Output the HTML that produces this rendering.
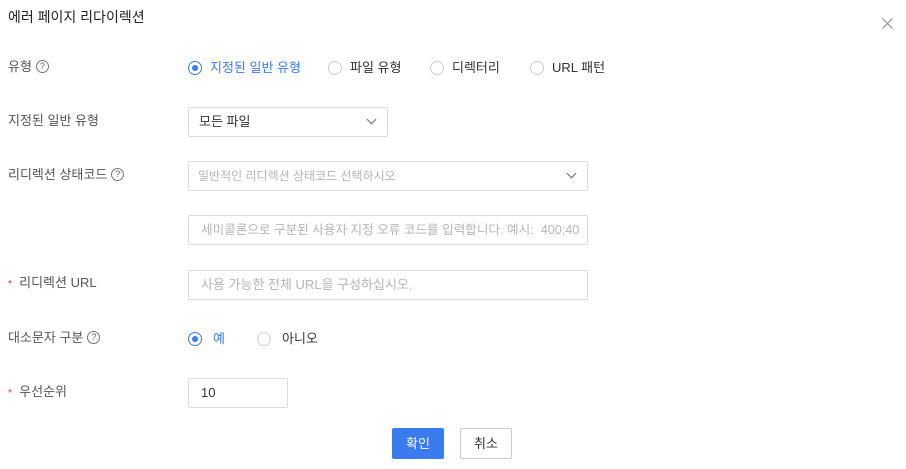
<!DOCTYPE html>
<html><head><meta charset="utf-8"><style>
*{margin:0;padding:0;box-sizing:border-box}
body{width:906px;height:469px;background:#fff;position:relative;overflow:hidden;font-family:"Liberation Sans","Noto Sans CJK KR",sans-serif;font-size:13px;color:#333}
.a{position:absolute;white-space:nowrap;line-height:16px}
.lbl{color:#555}
.box{position:absolute;border:1px solid #dcdcdc;border-radius:2px;background:#fff;overflow:hidden;white-space:nowrap}
.ph{color:#b5b5b5}
.q{display:inline-block;width:13px;height:13px;border:1px solid #777;border-radius:50%;font-size:9px;line-height:11px;text-align:center;color:#666;vertical-align:top;margin-top:1px;margin-left:4px}
.r{position:absolute;width:14px;height:14px;border:1px solid #ccc;border-radius:50%}
.r.on{border-color:#3a7bf0}
.r.on::after{content:"";position:absolute;left:3px;top:3px;width:6px;height:6px;border-radius:50%;background:#3a7bf0}
.star{color:#f5222d;font-size:10px}
.chev{position:absolute;width:7px;height:7px;border-right:1.2px solid #666;border-bottom:1.2px solid #666;transform:rotate(45deg)}
</style></head><body>
<div class="a" style="left:8px;top:9px;font-size:14px;color:#222">에러 페이지 리다이렉션</div>
<svg style="position:absolute;left:882px;top:18px" width="11" height="11"><path d="M0.5 0.5L10.5 10.5M10.5 0.5L0.5 10.5" stroke="#888" stroke-width="1.1"/></svg>

<div class="a lbl" style="left:8px;top:59px">유형<span class="q">?</span></div>
<div class="r on" style="left:188px;top:61px"></div><div class="a" style="left:210px;top:60px;color:#3a7bf0">지정된 일반 유형</div>
<div class="r" style="left:328px;top:61px"></div><div class="a" style="left:350px;top:60px">파일 유형</div>
<div class="r" style="left:430px;top:61px"></div><div class="a" style="left:452px;top:60px">디렉터리</div>
<div class="r" style="left:530px;top:61px"></div><div class="a" style="left:552px;top:60px">URL 패턴</div>

<div class="a lbl" style="left:8px;top:113px">지정된 일반 유형</div>
<div class="box" style="left:188px;top:107px;width:200px;height:30px"></div>
<div class="a" style="left:199px;top:114px">모든 파일</div>
<div class="chev" style="left:368px;top:116px"></div>

<div class="a lbl" style="left:8px;top:167px">리디렉션 상태코드<span class="q">?</span></div>
<div class="box" style="left:188px;top:161px;width:400px;height:30px"></div>
<div class="a ph" style="left:198px;top:168px;font-size:12px">일반적인 리디렉션 상태코드 선택하시오</div>
<div class="chev" style="left:568px;top:170px"></div>

<div class="box ph" style="left:188px;top:215px;width:400px;height:30px;padding:6px 0 0 12px;line-height:16px;font-size:12.6px">세미콜론으로 구분된 사용자 지정 오류 코드를 입력합니다. 예시:&nbsp; 400;40</div>

<div class="a lbl" style="left:8px;top:275px"><span class="star">*</span>&nbsp;&nbsp;리디렉션 URL</div>
<div class="box" style="left:188px;top:270px;width:400px;height:30px"></div>
<div class="a ph" style="left:201px;top:277px">사용 가능한 전체 URL을 구성하십시오.</div>

<div class="a lbl" style="left:8px;top:330px">대소문자 구분<span class="q">?</span></div>
<div class="r on" style="left:188px;top:332px"></div><div class="a" style="left:213px;top:331px;color:#3a7bf0">예</div>
<div class="r" style="left:257px;top:332px"></div><div class="a" style="left:282px;top:331px">아니오</div>

<div class="a lbl" style="left:8px;top:384px"><span class="star">*</span>&nbsp;&nbsp;우선순위</div>
<div class="box" style="left:188px;top:378px;width:100px;height:30px"></div>
<div class="a" style="left:201px;top:385px">10</div>

<div style="position:absolute;left:392px;top:428px;width:52px;height:31px;background:#3a7bf0;border-radius:2px;color:#fff;text-align:center;line-height:31px">확인</div>
<div style="position:absolute;left:460px;top:428px;width:52px;height:31px;border:1px solid #ccc;border-radius:2px;text-align:center;line-height:29px">취소</div>
</body></html>
